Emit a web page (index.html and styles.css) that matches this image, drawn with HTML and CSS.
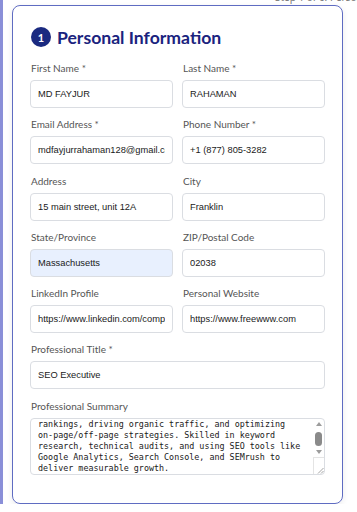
FILE: index.html
```html
<!DOCTYPE html>
<html lang="en">
<head>
<meta charset="utf-8">
<title>Personal Information</title>
<link rel="stylesheet" href="styles.css">
</head>
<body>
<div class="page">
  <div class="step">Step 1 of 6: Personal Information</div>
  <section class="card">
    <h2 class="heading"><span class="num">1</span>Personal Information</h2>
    <div class="grid">
      <div class="field"><label>First Name *</label><input type="text" value="MD FAYJUR"></div>
      <div class="field"><label>Last Name *</label><input type="text" value="RAHAMAN"></div>
      <div class="field"><label>Email Address *</label><input type="text" value="mdfayjurrahaman128@gmail.com"></div>
      <div class="field"><label>Phone Number *</label><input type="text" value="+1 (877) 805-3282"></div>
      <div class="field"><label>Address</label><input type="text" value="15 main street, unit 12A"></div>
      <div class="field"><label>City</label><input type="text" value="Franklin"></div>
      <div class="field"><label>State/Province</label><input class="autofill" type="text" value="Massachusetts"></div>
      <div class="field"><label>ZIP/Postal Code</label><input type="text" value="02038"></div>
      <div class="field"><label>LinkedIn Profile</label><input type="text" value="https://www.linkedin.com/company/freewww"></div>
      <div class="field"><label>Personal Website</label><input type="text" value="https://www.freewww.com"></div>
      <div class="field wide"><label>Professional Title *</label><input type="text" value="SEO Executive"></div>
      <div class="field wide"><label>Professional Summary</label>
        <div class="summary-box">
          <textarea class="summary">Results-driven SEO Executive with 3+ years
of experience in improving search engine
rankings, driving organic traffic, and optimizing
on-page/off-page strategies. Skilled in keyword
research, technical audits, and using SEO tools like
Google Analytics, Search Console, and SEMrush to
deliver measurable growth.</textarea>
          <div class="vscroll">
            <span class="arrow-btn"><span class="tri up"></span></span>
            <span class="thumb"></span>
            <span class="arrow-btn down-btn"><span class="tri down"></span></span>
            <span class="corner"><svg width="8" height="8" viewBox="0 0 8 8"><path d="M7.5 2 L2 7.5 M7.5 5 L5 7.5" stroke="#9a9a9a" stroke-width="0.9" fill="none"/></svg></span>
          </div>
        </div>
      </div>
    </div>
  </section>
</div>
<script src="script.js"></script>
</body>
</html>
```

FILE: styles.css
```css
html, body {
  margin: 0;
  padding: 0;
  background: #ffffff;
}
body {
  overflow: hidden;
  font-family: "Noto Sans", "Open Sans", sans-serif;
}
.page {
  border-left: 3px solid #8a8fd8;
  min-height: 512px;
  box-sizing: border-box;
  padding: 0 14px 0 9px;
}
.step {
  margin: -9px 0 2px 263px;
  white-space: nowrap;
  font-size: 10px;
  line-height: 12px;
  color: #777;
}
.card {
  border: 1px solid #5f6cc2;
  border-radius: 8px;
  box-shadow: 0 2px 6px rgba(0, 0, 0, 0.08);
  padding: 18px 17px 28px 17px;
  height: 499px;
  box-sizing: border-box;
}
.heading {
  display: flex;
  align-items: center;
  gap: 6px;
  margin: 0 0 11px 0;
  height: 26px;
  font-family: Lato, "Noto Sans", sans-serif;
  font-size: 17.6px;
  font-weight: 700;
  color: #1a237e;
}
.num {
  width: 20px;
  height: 20px;
  border-radius: 50%;
  background: #1a2a80;
  color: #fff;
  font-size: 11px;
  font-weight: 700;
  display: flex;
  align-items: center;
  justify-content: center;
  margin-left: 1px;
}
.grid {
  display: grid;
  grid-template-columns: 143px 143px;
  column-gap: 9px;
  row-gap: 9.3px;
}
.field {
  display: flex;
  flex-direction: column;
  min-width: 0;
}
.wide {
  grid-column: 1 / 3;
}
.field label {
  font-family: Lato, "Noto Sans", sans-serif;
  font-size: 10px;
  line-height: 14px;
  color: #555;
  margin: 0 0 5px 1px;
}
.field input {
  height: 28px;
  box-sizing: border-box;
  border: 1px solid #dadde2;
  border-radius: 4px;
  padding: 0 7px;
  font-family: "Liberation Sans", Arial, sans-serif;
  font-size: 9.3px;
  color: #1a1a1a;
  background: #fff;
  width: 100%;
  outline: none;
}
.field input.autofill {
  background: #e8f0fe;
}
.summary-box {
  display: flex;
  height: 57px;
  box-sizing: border-box;
  border: 1px solid #dadde2;
  border-radius: 4px;
  background: #fff;
  overflow: hidden;
}
.summary {
  flex: 1;
  min-width: 0;
  height: 55px;
  box-sizing: border-box;
  border: 0;
  margin: 0;
  padding: 0 7px;
  font-family: "DejaVu Sans Mono", "Liberation Mono", monospace;
  font-size: 8.4px;
  line-height: 11px;
  color: #1a1a1a;
  resize: none;
  overflow: hidden;
  outline: none;
  background: transparent;
}
.vscroll {
  width: 11px;
  display: flex;
  flex-direction: column;
  align-items: center;
}
.arrow-btn {
  height: 11px;
  width: 100%;
  display: flex;
  align-items: center;
  justify-content: center;
}
.down-btn {
  height: 10px;
}
.tri {
  width: 0;
  height: 0;
  border-left: 3.5px solid transparent;
  border-right: 3.5px solid transparent;
}
.tri.up {
  border-bottom: 4px solid #9c9c9c;
}
.tri.down {
  border-top: 4px solid #9c9c9c;
}
.thumb {
  width: 7px;
  height: 14px;
  margin: 2px 0 1px;
  border-radius: 4px;
  background: #8a8a8a;
}
.corner {
  flex: 1;
  width: 100%;
  box-sizing: border-box;
  border-left: 1px solid #e4e4e4;
  border-top: 1px solid #e4e4e4;
  display: flex;
  align-items: flex-end;
  justify-content: flex-end;
}
.corner svg {
  display: block;
}
```

FILE: script.js
```js
var s = document.querySelector('.summary');
s.scrollTop = s.scrollHeight;
```
